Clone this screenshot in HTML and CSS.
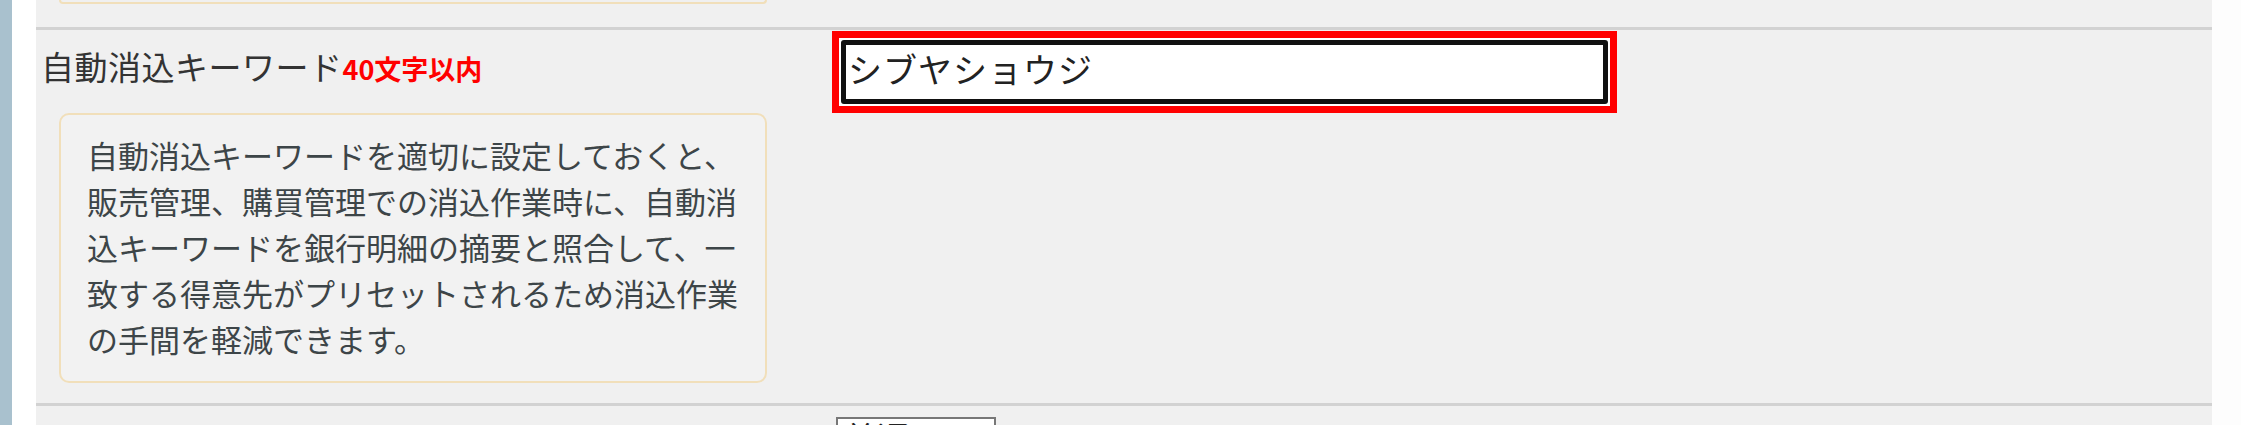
FILE: index.html
```html
<!DOCTYPE html>
<html lang="ja">
<head>
  <meta charset="UTF-8">
  <meta name="viewport" content="width=device-width, initial-scale=1.0">
  <title>自動消込キーワード</title>
  <link rel="stylesheet" href="styles.css">
</head>
<body>
  <div class="page">
    <div class="side-bar"></div>
    <div class="gutter"></div>

    <div class="main">
      <!-- end of the previous row -->
      <div class="form-row prev-row">
        <div class="help-box-end"></div>
      </div>

      <div class="form-row">
        <div class="label-col">
          <label class="field-label" for="keyword">自動消込キーワード<span class="limit">40文字以内</span></label>
          <div class="help-box">
            自動消込キーワードを適切に設定しておくと、<br>
            販売管理、購買管理での消込作業時に、自動消<br>
            込キーワードを銀行明細の摘要と照合して、一<br>
            致する得意先がプリセットされるため消込作業<br>
            の手間を軽減できます。
          </div>
        </div>
        <div class="input-col">
          <div class="highlight">
            <input type="text" id="keyword" class="keyword-input" value="シブヤショウジ">
          </div>
        </div>
      </div>

      <div class="form-row next-row">
        <div class="label-col"></div>
        <div class="input-col">
          <input type="text" class="small-input" value="普通">
        </div>
      </div>
    </div>

    <div class="right-edge"></div>
  </div>
</body>
</html>
```

FILE: styles.css
```css
body,
html {
  height: 100%;
}

body {
  margin: 0;
  padding: 0;
  overflow: hidden;
  font-family: "Noto Sans CJK JP", "Noto Sans", sans-serif;
  color: #333;
  background-color: #fff;
}

.page {
  display: flex;
  height: 425px;
}

/* left frame */
.side-bar {
  width: 12px;
  background-color: #a9c1ce;
}

.gutter {
  width: 24px;
  background-color: #fff;
}

.main {
  width: 2176px;
  background-color: #f0f0f0;
}

.right-edge {
  flex: 1;
  background-color: #fdfdfd;
}

/* rows */
.form-row {
  display: flex;
  border-bottom: 3px solid #d2d2d2;
  height: 373px;
}

.prev-row {
  height: 27px;
  display: block;
}

.help-box-end {
  width: 704px;
  height: 2px;
  margin-left: 23px;
  border: 2px solid #f1dfba;
  border-top: none;
  border-radius: 0 0 10px 10px;
}

.next-row {
  border-bottom: none;
  height: auto;
}

.label-col {
  width: 791px;
  padding-left: 5px;
}

.input-col {
  flex: 1;
}

/* label */
.field-label {
  display: block;
  margin-top: 20px;
  font-size: 33px;
  line-height: 33px;
  letter-spacing: 0.5px;
  color: #333;
}

.limit {
  color: #ff0000;
  font-weight: bold;
  font-size: 27px;
  letter-spacing: 0;
}

/* help text */
.help-box {
  width: 652px;
  margin-top: 28px;
  margin-left: 18px;
  padding: 17px 26px 19px 26px;
  border: 2px solid #f1dfba;
  border-radius: 10px;
  background-color: #f2f2f2;
  font-size: 31px;
  line-height: 46px;
  color: #3d4548;
  white-space: nowrap;
}

/* keyword input with red highlight */
.highlight {
  width: 767px;
  margin-top: 1px;
  padding: 2px;
  border: 7px solid #ff0000;
  background-color: #fff;
}

.keyword-input {
  display: block;
  box-sizing: border-box;
  width: 100%;
  height: 64px;
  padding: 0 4px 8px 2px;
  border: 5px solid #111;
  border-radius: 3px;
  font-family: "Noto Sans CJK JP", sans-serif;
  font-size: 34px;
  letter-spacing: 1px;
  color: #222;
  background-color: #fff;
  outline: none;
}

.small-input {
  box-sizing: border-box;
  width: 160px;
  height: 40px;
  margin-top: 11px;
  margin-left: 4px;
  padding: 0 6px;
  border: 2px solid #777;
  font-family: "Noto Sans CJK JP", sans-serif;
  font-size: 33px;
  color: #222;
  background-color: #fff;
}
```
